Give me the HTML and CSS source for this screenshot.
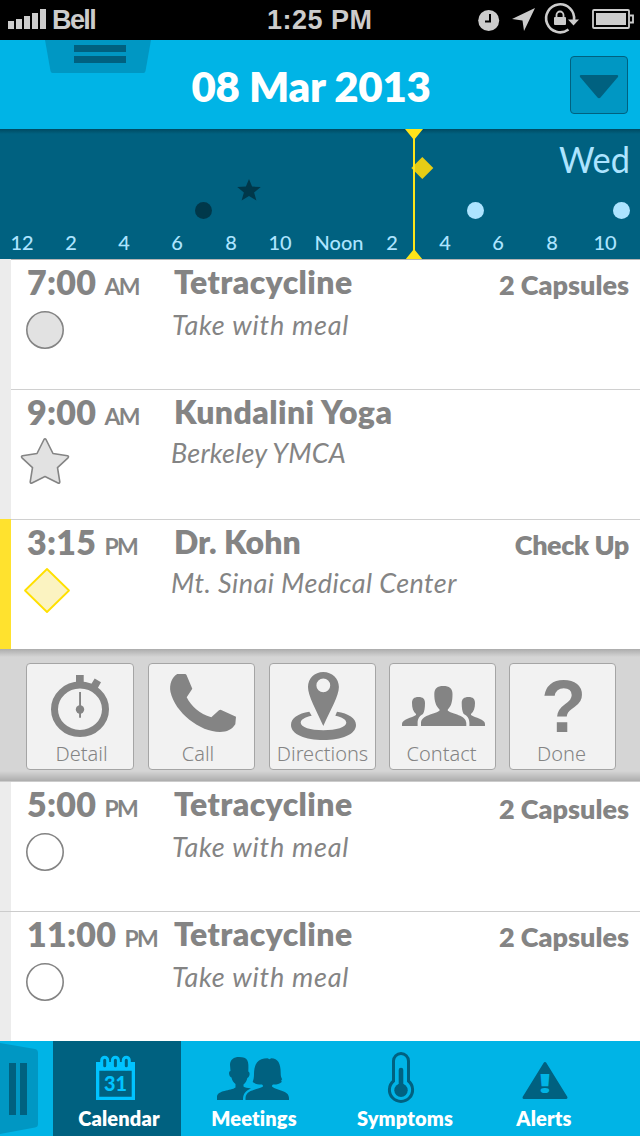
FILE: index.html
```html
<!DOCTYPE html>
<html lang="en">
<head>
<meta charset="utf-8">
<title>Calendar</title>
<link rel="stylesheet" href="styles.css">
</head>
<body>
<div class="app">
  <div class="status">
    <svg class="signal" width="39" height="20" viewBox="0 0 39 20" fill="#ccc"><path d="M0 12h6v8H0zM8 10h6v10H8zM16 7h6v13h-6zM24 4h6v16h-6zM32 0h6v20h-6z"/></svg>
    <span class="carrier">Bell</span>
    <span class="clock">1:25 PM</span>
    <svg class="indicators" width="162" height="40" viewBox="0 0 162 40">
      <circle cx="10.700" cy="20.500" r="10.500" fill="#ccc"/>
      <path d="M12 14v7.500H7" fill="none" stroke="#000" stroke-width="2"/>
      <path d="M57 8 46 31 44.500 20.500 34 19z" fill="#ccc"/>
      <path d="M96 20A14 14 0 1 0 90.500 29.500" fill="none" stroke="#ccc" stroke-width="2.600"/>
      <path d="M90 19.500h11l-5.500 6z" fill="#ccc"/>
      <rect x="76" y="17" width="12" height="8" rx="1" fill="#ccc"/>
      <path d="M78.500 17v-2a3.500 3.500 0 0 1 7 0v2" fill="none" stroke="#ccc" stroke-width="1.800"/>
      <rect x="115" y="10" width="36" height="18" rx="1" fill="none" stroke="#ccc" stroke-width="1.800"/>
      <rect x="118" y="13" width="30" height="12" fill="#ccc"/>
      <path d="M152 15.500h3v7h-3" fill="none" stroke="#ccc" stroke-width="1.800"/>
    </svg>
  </div>

  <header class="header">
    <svg class="pull" width="106" height="34" viewBox="0 0 106 34">
      <path d="M0 0h106l-5.500 31q-.400 2-2 2h-91q-1.600 0-2-2z" fill="#0097c3"/>
      <path d="M29 5h52v7H29zM29 16h52v7H29z" fill="#006180"/>
    </svg>
    <h1 class="date">08 Mar 2013</h1>
    <button class="dropdown" aria-label="Choose date">
      <svg width="40" height="26" viewBox="0 0 40 26"><path d="M2 1h36q2 .500 .700 2.200L21.500 23.500q-1.500 1.500-3 0L1.300 3.200Q0 1.500 2 1z" fill="#006180"/></svg>
    </button>
  </header>

  <svg class="timeline" width="640" height="130" viewBox="0 0 640 130">
    <g class="hours">
      <text x="22" y="121">12</text><text x="71" y="121">2</text><text x="124" y="121">4</text>
      <text x="177" y="121">6</text><text x="231" y="121">8</text><text x="280" y="121">10</text>
      <text x="339" y="121">Noon</text><text x="392" y="121">2</text><text x="445" y="121">4</text>
      <text x="498" y="121">6</text><text x="552" y="121">8</text><text x="605" y="121">10</text>
    </g>
    <text class="weekday" x="559" y="44" textLength="71" lengthAdjust="spacingAndGlyphs">Wed</text>
    <circle cx="203.500" cy="81.500" r="8.500" fill="#00384a"/>
    <path d="M249 50l3.100 7.600 8.700.500-6.700 5.300 2.300 8.100-7.400-4.500-7.400 4.500 2.300-8.100-6.700-5.300 8.700-.500z" fill="#00384a"/>
    <path d="M422.300 28l11 11-11 11-11-11z" fill="#e6cd15"/>
    <circle cx="475.500" cy="81.500" r="8.500" fill="#ade4ff"/>
    <circle cx="621.500" cy="81.500" r="8.500" fill="#ade4ff"/>
    <path d="M413 0h2v130h-2zM405 0h18l-9 11zM405 131l9-11 9 11z" fill="#ffe419"/>
  </svg>

  <main class="agenda">
    <section class="event first">
      <div class="when"><p class="time">7:00 <small>AM</small></p>
        <svg width="54" height="50" viewBox="0 0 54 50"><circle cx="26" cy="25" r="18.200" fill="#e2e2e2" stroke="#848484" stroke-width="1.600"/></svg></div>
      <div class="what"><h2 class="title">Tetracycline</h2><p class="note">Take with meal</p></div>
      <p class="extra">2 Capsules</p>
    </section>
    <section class="event visit">
      <div class="when"><p class="time">9:00 <small>AM</small></p>
        <svg width="54" height="50" viewBox="0 0 54 50"><path d="M25 4.500Q26 3 27 4.500l7 14 14.500 2.300q1.700.500.500 2L38.500 32.600l2.300 14.200q0 1.800-1.800 1.200L26 41.500 13 48q-1.800.600-1.800-1.200l2.300-14.200L3 22.800q-1.200-1.500.500-2L18 18.500z" fill="#e2e2e2" stroke="#848484" stroke-width="1.600" stroke-linejoin="round"/></svg></div>
      <div class="what"><h2 class="title">Kundalini Yoga</h2><p class="note">Berkeley YMCA</p></div>
    </section>
    <section class="event visit active">
      <div class="when"><p class="time">3:15 <small>PM</small></p>
        <svg width="54" height="50" viewBox="0 0 54 50"><path d="M28 4 50 25.500 28 47 6 25.500z" fill="#fbf3c1" stroke="#ffe000" stroke-width="1.800" stroke-linejoin="round"/></svg></div>
      <div class="what"><h2 class="title doctor">Dr. Kohn</h2><p class="note center">Mt. Sinai Medical Center</p></div>
      <p class="extra checkup">Check Up</p>
    </section>

    <nav class="actions">
      <button class="action detail"><svg width="106" height="106" viewBox="1 1 106 106" fill="#848484"><ellipse cx="54" cy="46.300" rx="25.500" ry="24.200" fill="none" stroke="#848484" stroke-width="7"/><path d="M50 12h7.700v8.500H50zM68.700 15.600l6.300 3.700-3.500 6.200-6.500-4zM53.100 29h1.900v25.700h-1.900z"/><circle cx="54" cy="46.500" r="4.200"/></svg><span>Detail</span></button>
      <button class="action call"><svg width="106" height="106" viewBox="1 1 106 106" fill="#848484"><path d="M29.300 11H37q1 0 1.500 1l5.800 13.700-5.600 8.600C43 43 51.500 51 63.300 54.300l7.700-7.100q1-.800 2.200-.300L88 53.700l-.700 7.600C84 66.500 79 69 72 69 52 69 27 49.500 22.500 29 21 21.500 24 14 29.300 11z"/></svg><span>Call</span></button>
      <button class="action directions"><svg width="106" height="106" viewBox="1 1 106 106" fill="#848484"><path fill-rule="evenodd" d="M54.300 9C45.500 9 39 15.500 39 24c0 9 8 22.500 15.300 39C61.600 46.500 69.900 33 69.900 24 69.900 15.500 63 9 54.300 9zm0 6.500a6.900 6.900 0 1 1 0 13.800 6.900 6.900 0 0 1 0-13.800z"/><path d="M40.300 48.700C29 50.500 22 55 22 62c0 9.500 14.500 15 32.500 15S87 71.500 87 62c0-7-7.500-11.500-19-13.300l-1.700 4c7 1.500 11 4 11 7 0 4.500-10 7.500-23 7.500s-22.600-3-22.600-7.500c0-3 4-5.500 11-7z"/></svg><span>Directions</span></button>
      <button class="action"><svg width="106" height="106" viewBox="1 1 106 106" fill="#848484"><path d="M54.300 23c-6 0-9 2.500-9 8 0 7 1.500 12 5.200 15.500v1.200C46 51 32 52 32 60v3h45.300v-3c0-8-14-9-18.500-12.300v-1.200C62.500 43 63.500 38 63.500 31c0-5.500-3.200-8-9.200-8z"/><path d="M29.500 34c-4.500 0-6.500 2-6.500 6 0 5 1.200 8.500 4 11v1C23 55 13 56 13 61v2h15.600v-3c0-4.500 2-7 5.400-9 1.400-2.500 2-6 2-11 0-4-2-6-6.500-6zM79.500 34c4.500 0 6.500 2 6.500 6 0 5-1.200 8.500-4 11v1c4 3 14 4 14 9v2H80.400v-3c0-4.500-2-7-5.700-9-1.400-2.500-2-6-2-11 0-4 2.300-6 6.800-6z"/></svg><span>Contact</span></button>
      <button class="action"><svg width="106" height="106" viewBox="1 1 106 106" fill="#848484"><text class="query" x="32" y="69">?</text></svg><span>Done</span></button>
    </nav>

    <section class="event full">
      <div class="when"><p class="time">5:00 <small>PM</small></p>
        <svg width="54" height="50" viewBox="0 0 54 50"><circle cx="26" cy="25" r="18.200" fill="#fff" stroke="#848484" stroke-width="1.600"/></svg></div>
      <div class="what"><h2 class="title">Tetracycline</h2><p class="note">Take with meal</p></div>
      <p class="extra low">2 Capsules</p>
    </section>
    <section class="event full">
      <div class="when"><p class="time">11:00 <small>PM</small></p>
        <svg width="54" height="50" viewBox="0 0 54 50"><circle cx="26" cy="25" r="18.200" fill="#fff" stroke="#848484" stroke-width="1.600"/></svg></div>
      <div class="what"><h2 class="title">Tetracycline</h2><p class="note">Take with meal</p></div>
      <p class="extra">2 Capsules</p>
    </section>
  </main>

  <nav class="tabs">
    <svg class="drawer" width="53" height="95" viewBox="0 0 53 95"><path d="M0 2l35 6q3 .500 3 4v71q0 3-3 3.500L0 93z" fill="#0097c3"/><path d="M9 22h7v52H9zM20 22h7v52h-7z" fill="#006180"/></svg>
    <a class="tab calendar">
      <svg width="128" height="67" viewBox="0 0 128 67"><path d="M43 21h39v38H43z" fill="#00c3ff"/><path d="M46.300 29.700h32.400v26.100H46.300z" fill="#006180"/><g fill="#006180" stroke="#00c3ff" stroke-width="3"><rect x="48.700" y="16.200" width="6" height="11.500" rx="3"/><rect x="59.400" y="16.200" width="6" height="11.500" rx="3"/><rect x="70.300" y="16.200" width="6" height="11.500" rx="3"/></g><text class="day" x="51" y="50.300" textLength="23" lengthAdjust="spacingAndGlyphs">31</text></svg>
      <span>Calendar</span></a>
    <a class="tab meetings">
      <svg width="146" height="67" viewBox="0 0 146 67" fill="#006180"><path d="M58 16c-5 0-9 2.500-9 8l.500 6c-2.500 0-1.500 6 1 6.500.500 3 2 5 4 6.500v3.500C50 50 36 49 36 56v3h26c0-6 2-9 8-11.500-4-.500-6-1-7.500-2v-2c2-1.500 3.300-3.500 3.800-6.500 2.500-.500 3.200-6 1-6.500C68 20 67 16 58 16z"/><path d="M86.500 17.300C77 17.300 73 23 73 33c0 3-.500 6-1.300 8 2 2 5.300 2.500 8.300 2.500 1.500 0 2 .500 2 2C77 49 65 48 64.500 57v2H108v-2c0-8-12-7-17-11.500 0-1.500.500-2 2-2 3 0 5.500-.300 7.700-2.500l-.500-2 1-.500C100 36 99.700 35 99.700 32c0-9.500-2.700-14.700-9.500-14.700l-1.700 1z"/></svg>
      <span>Meetings</span></a>
    <a class="tab symptoms">
      <svg width="156" height="67" viewBox="0 0 156 67"><path d="M66.500 40V20a7.500 7.500 0 0 1 15 0v20a11.600 11.600 0 1 1-15 0z" fill="none" stroke="#006180" stroke-width="3"/><circle cx="74" cy="49.300" r="6.700" fill="#006180"/><path d="M74 48V29" stroke="#006180" stroke-width="4.600" stroke-linecap="round"/></svg>
      <span>Symptoms</span></a>
    <a class="tab alerts">
      <svg width="122" height="67" viewBox="0 0 122 67"><path d="M62 22.500 83 56.500H41z" fill="#006180" stroke="#006180" stroke-width="3" stroke-linejoin="round"/><text class="bang" x="56" y="52" textLength="12" lengthAdjust="spacingAndGlyphs">!</text></svg>
      <span>Alerts</span></a>
  </nav>
</div>
</body>
</html>
```

FILE: styles.css
```css
* { box-sizing: border-box; }
body { margin: 0; background: #fff; font-family: Lato, "Noto Sans", sans-serif; color: #848484; }
h1, h2, p { margin: 0; white-space: nowrap; }
svg { display: block; flex: none; }
button { padding: 0; font: inherit; color: inherit; }
.app { width: 640px; height: 1136px; overflow: hidden; display: flex; flex-direction: column; }

.status { height: 40px; flex: none; background: #000; color: #ccc; display: grid; grid-template-columns: 52px 215px 211px 162px; align-items: center; font: bold 27px/40px "Liberation Sans", Arial, sans-serif; }
.signal { margin: 0 0 2px 8px; }
.carrier { letter-spacing: -1.6px; }
.clock { letter-spacing: 0.5px; }

.header { position: relative; height: 89px; flex: none; background: #00b4e6; display: flex; align-items: center; justify-content: center; padding-right: 18px; }
.pull { position: absolute; left: 45px; top: 0; }
.date { color: #fff; font-size: 42px; line-height: 50px; font-weight: 800; letter-spacing: -0.3px; padding-top: 3px; }
.dropdown { position: absolute; right: 12px; top: 16px; width: 58px; height: 58px; border: 1px solid #006180; border-radius: 4px; background: #0097c3; display: flex; align-items: center; justify-content: center; }
.dropdown svg { margin-top: 4px; }

.timeline { height: 130px; background: linear-gradient(#004a61, #006180 5px); }
.hours { font-size: 20px; font-weight: 500; text-anchor: middle; fill: #ade4ff; }
.weekday { font-size: 36px; fill: #ade4ff; }

.agenda { height: 782px; flex: none; }
.event { --strip: #ececec; --line: #d0d0d0; height: 130px; display: flex; padding: 1px 0 0 11px; background: linear-gradient(90deg, var(--strip) 11px, transparent 11px), linear-gradient(var(--line) 1px, #fff 1px); }
.active { --strip: #ffe22e; }
.first { --line: #b5b5b5; }
.full { border-top: 1px solid #ccc; padding-top: 0; background: linear-gradient(90deg, #ececec 11px, #fff 11px); }
.when { width: 160px; padding: 2px 0 0 8px; }
.time { font-size: 34px; line-height: 40px; font-weight: 800; padding-left: 8px; letter-spacing: 0.3px; }
.time small { font-size: 23px; font-weight: 700; letter-spacing: -1.8px; }
.when svg { margin-top: -1px; }
.what { flex: 1; padding-top: 2px; }
.title { font-size: 32px; line-height: 40px; font-weight: 800; padding-left: 3px; letter-spacing: 0.4px; }
.doctor { letter-spacing: 0; }
.note { font-size: 27px; line-height: 40px; font-style: italic; font-weight: 400; padding: 3px 0 0 1px; letter-spacing: 0.75px; }
.visit .note { padding: 1px 0 0 0; letter-spacing: 0.2px; }
.visit .center { letter-spacing: 0.45px; }
.extra { font-size: 27px; line-height: 40px; font-weight: 800; padding: 5px 11px 0 0; letter-spacing: 0; }
.checkup { letter-spacing: -0.4px; }
.low { padding-top: 7px; }

.actions { height: 132px; display: flex; gap: 13px; padding: 14px 0 0 26px; background: linear-gradient(#acacac, #d5d5d5 8px, #d5d5d5 122px, #adadad); }
.action { position: relative; width: 107px; height: 107px; border: 1px solid #a5a5a5; border-radius: 4px; background: #f2f2f2; }
.action span { position: absolute; left: 0; right: 2px; bottom: 7px; text-align: center; font: 300 20px/16px "Noto Sans", sans-serif; }
.action svg { margin-right: -1px; }
.detail { width: 108px; }
.detail span { left: 3px; right: 0; }
.call { margin-left: 1px; }
.call span { right: 7px; }
.directions { margin-left: 1px; }
.directions span { right: 0; }
.query { font: bold 74px "Liberation Sans", Arial, sans-serif; }

.tabs { height: 95px; flex: none; display: flex; background: #00b4e6; color: #fff; }
.tab { display: flex; flex-direction: column; font-size: 20px; line-height: 20px; font-weight: 800; letter-spacing: 0.15px; text-align: center; white-space: nowrap; }
.calendar { background: #006180; }
.calendar span { padding-left: 4px; }
.day { font: 900 21px Lato, sans-serif; letter-spacing: 0; fill: #00c3ff; }
.bang { font: 900 27px "Noto Sans", sans-serif; letter-spacing: 0; fill: #00b4e6; }
```
